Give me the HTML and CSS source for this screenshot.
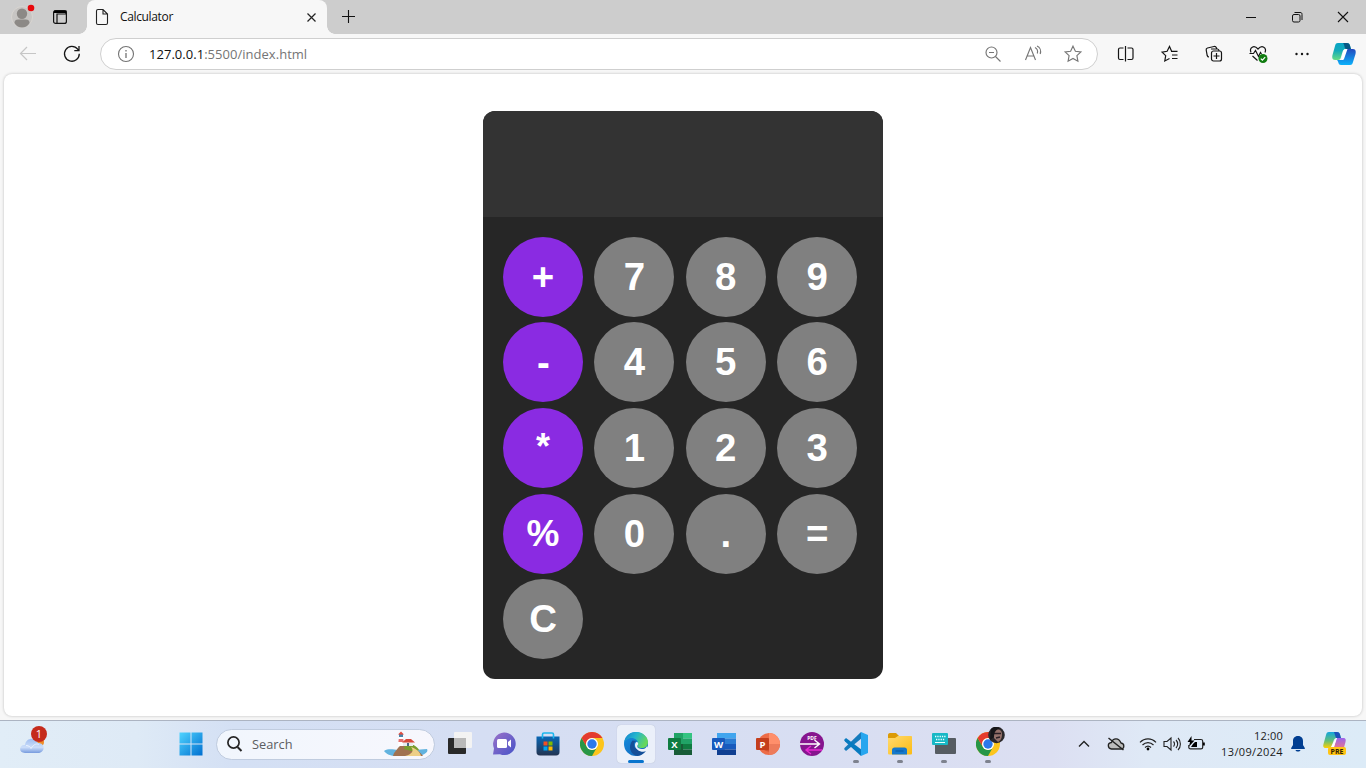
FILE: index.html
```html
<!DOCTYPE html>
<html lang="en">
<head>
<meta charset="utf-8">
<title>Calculator</title>
<link rel="stylesheet" href="styles.css">
</head>
<body>
<header class="tabstrip">
  <svg class="avatar" width="28" height="28" viewBox="0 0 28 28"><circle cx="14" cy="14" r="10.5" fill="#c7c5c3" stroke="#d8d5d1"/><circle cx="14" cy="10.700" r="5.200" fill="#8c8986"/><path d="M6.500 20c0-3 2-3.500 4-3.500h7c2 0 4 .5 4 3.500-3 6-12 6-15 0z" fill="#8c8986"/><circle cx="23" cy="5" r="3.300" fill="#e8080c"/></svg>
  <svg class="workspaces" width="16" height="16" viewBox="0 0 16 16"><rect x="1.600" y="1.600" width="12.800" height="12.800" rx="2" fill="none" stroke="#111" stroke-width="1.200"/><path d="M2 2h12v3H5v9" fill="none" stroke="#111" stroke-width="1.200"/><path d="M2 2h12v2H2z"/></svg>
  <div class="tab">
    <svg class="file" width="16" height="18" viewBox="0 0 16 18"><path d="M4 1.500h5l4.500 4.500v9c0 1-.5 1.500-1.500 1.500H4c-1 0-1.500-.5-1.500-1.500V3c0-1 .5-1.500 1.500-1.500zM9 1.500V6h4.500" fill="none" stroke="#222" stroke-width="1.100"/></svg>
    <span class="tab-title">Calculator</span>
    <svg width="12" height="12" viewBox="0 0 12 12"><path d="M2.500 2.500l8 8M10.500 2.500l-8 8" stroke="#222" stroke-width="1.200"/></svg>
  </div>
  <svg class="plus" width="16" height="16" viewBox="0 0 16 16"><path d="M8.500 1v13M2 7.500h13" stroke="#111" stroke-width="1.100"/></svg>
  <div class="window-buttons">
    <svg viewBox="0 0 46 34"><path d="M18 17.500h10" stroke="#111"/></svg>
    <svg viewBox="0 0 46 34"><rect x="18.500" y="14.500" width="7.500" height="7.500" rx="1.500" fill="none" stroke="#111"/><path d="M20.500 12.500H26c1.500 0 2 .5 2 2V20" fill="none" stroke="#111"/></svg>
    <svg viewBox="0 0 46 34"><path d="M18 12l10 10M28 12L18 22" stroke="#111" stroke-width="1.100"/></svg>
  </div>
</header>
<nav class="toolbar">
  <svg class="back" width="20" height="20" viewBox="0 0 20 20"><path d="M18 9.500H2.500M9 3L2.500 9.500 9 16" fill="none" stroke="#c6c6c6" stroke-width="1.200"/></svg>
  <svg class="reload" width="20" height="20" viewBox="0 0 20 20"><path d="M17.300 9.800a7.400 7.400 0 1 1-1.600-4.600L17 6.500M17 2v4.700h-4.700" fill="none" stroke="#151515" stroke-width="1.300"/></svg>
  <div class="address">
    <svg class="info" width="18" height="18" viewBox="0 0 18 18"><circle cx="9" cy="9" r="7.500" fill="none" stroke="#737373" stroke-width="1.100"/><path d="M9 8v5M9 5v1.400" stroke="#737373" stroke-width="1.300"/></svg>
    <span class="url"><b>127.0.0.1</b>:5500/index.html</span>
    <div class="address-icons">
      <svg viewBox="0 0 20 20"><circle cx="8.500" cy="8.500" r="5.500"/><path d="M12.500 12.500l5 5M6 8.500h5"/></svg>
      <svg viewBox="0 0 20 20"><path d="M2.500 16L7.500 3.500 12.500 16M4.200 12h6.600M12 3.500c2 1 3 3.500 2.300 6M14 2c3 1.200 4.300 4.500 3.200 8"/></svg>
      <svg viewBox="0 0 20 20"><path d="M10 2.200l2.400 5 5.500.7-4 3.800 1 5.500-4.900-2.700-4.900 2.700 1-5.500-4-3.800 5.500-.7z"/></svg>
    </div>
  </div>
  <div class="actions">
    <svg viewBox="0 0 20 20"><path d="M7.500 4H4C3 4 2.500 4.500 2.500 5.500v8.500c0 1 .5 1.500 1.500 1.500h3.500M11.500 4h4c1 0 1.500.5 1.500 1.500v8.500c0 1-.5 1.500-1.500 1.500h-4M9.500 2v15.500"/></svg>
    <svg viewBox="0 0 20 20"><path d="M11.500 7L9.500 2.500 7.100 7.300l-5 .8 3.600 3.600-.9 5.300 4.700-2.500M11 7.300h6.500M12 11h5.500M12 14.500h5.500"/></svg>
    <svg viewBox="0 0 20 20"><rect x="7.500" y="7" width="10" height="10" rx="2"/><path d="M12.500 9v6M9.500 12h6M5 13c-1 0-1.500-.5-1.800-1.500L2.200 6c-.2-1 .3-1.700 1.300-2l6.500-1.500c1.300-.2 2 .3 2.500 1.500l.3.900M7 5h6.500c1 0 1.500.5 1.500 2"/></svg>
    <svg viewBox="0 0 20 20"><path d="M3 8.500C1 3.500 6 .5 10 5c4-4.500 9-1.500 7 3.500M1.500 9.500h4l2-3 3 6 2-4 1 1.500M4.500 12l5 4.500"/><circle class="ok" cx="15" cy="14.500" r="4.500"/><path class="tick" d="M12.800 14.600l1.600 1.600 2.800-3"/></svg>
    <svg viewBox="0 0 20 20"><g class="dots"><circle cx="4.500" cy="10" r="1.200"/><circle cx="10" cy="10" r="1.200"/><circle cx="15.500" cy="10" r="1.200"/></g></svg>
  </div>
  <svg class="copilot" width="26" height="26" viewBox="0 0 26 26">
    <defs><linearGradient id="teal" x1="0" y1="0" x2="0" y2="1"><stop stop-color="#08a4c5"/><stop offset=".45" stop-color="#14aaba"/><stop offset="1" stop-color="#67dc83"/></linearGradient><linearGradient id="blue" x1="0" y1="0" x2="0" y2="1"><stop stop-color="#2349be"/><stop offset="1" stop-color="#0bb2fb"/></linearGradient></defs>
    <path d="M7 2h9c3 0 3 3 4 6h-5c-2 0-3 1-3.500 3L10 16c-.5 2-1 3-3 3H4c-3 0-3-3-2.500-5L4 5c.5-2 1-3 3-3z" fill="url(#teal)"/><path d="M12 2h4c3 0 3 3 4 6h-5c-2-1-1-4-3-6z" fill="#075884"/><path d="M16 8h6c3 0 3 3 2.500 5L22 21c-.5 2-1 3-3 3h-9c-3 0-2-3-4-5h3c3 0 3-1 3.600-3L15 10c.2-1 .5-1.600 1-2z" fill="url(#blue)"/><path d="M14.500 8h2L13 18c-.4 1-1 1-3 1 2-3 1.500-11 4.500-11z" fill="#fff"/>
  </svg>
</nav>
<main class="viewport">
  <section class="calculator">
    <div class="display"></div>
    <div class="keys">
      <button class="key op">+</button><button class="key">7</button><button class="key">8</button><button class="key">9</button>
      <button class="key op minus">-</button><button class="key">4</button><button class="key">5</button><button class="key">6</button>
      <button class="key op times">*</button><button class="key">1</button><button class="key">2</button><button class="key">3</button>
      <button class="key op percent">%</button><button class="key">0</button><button class="key">.</button><button class="key">=</button>
      <button class="key">C</button>
    </div>
  </section>
</main>
<footer class="taskbar">
  <svg class="weather" width="30" height="32" viewBox="0 0 30 32"><defs><linearGradient id="cloud" x1="0" y1="0" x2="0" y2="1"><stop stop-color="#9fbdf0"/><stop offset=".6" stop-color="#ccdefa"/><stop offset="1" stop-color="#779bde"/></linearGradient></defs><circle cx="20" cy="17" r="4" fill="#ef8d27"/><path d="M5 28c-7 0-6-8.500 0-8 1-8 11-8 13-2 8 0 7 10 0 10z" fill="url(#cloud)"/><path d="M6 20.500c3 0 5 2 5 3 3-5 6-5 8-4" fill="none" stroke="#eaf3ff"/><circle cx="19" cy="9" r="8" fill="#c52b1c"/><text class="badge" x="19" y="13" text-anchor="middle">1</text></svg>
  <svg class="start" width="24" height="24" viewBox="0 0 24 24"><defs><linearGradient id="win" x1="0" y1="0" x2="1" y2="1"><stop stop-color="#4fd4ff"/><stop offset="1" stop-color="#006fd0"/></linearGradient></defs><path d="M.5.5h11v11H.5zM12.500.5h11v11h-11zM.5 12.500h11v11H.5zM12.500 12.500h11v11h-11z" fill="url(#win)"/></svg>
  <div class="search">
    <svg width="18" height="18" viewBox="0 0 18 18"><circle cx="7.500" cy="7.500" r="5.600" fill="none" stroke="#262626" stroke-width="1.700"/><path d="M11.500 12l4 4" stroke="#262626" stroke-width="2"/></svg>
    <span class="search-text">Search</span>
    <svg class="island" width="46" height="26" viewBox="0 0 46 26"><path d="M1 20c5-3 10-1 14-1s10 1 29-1c2 3-3 6-9 7H13C8 25 3 23 1 20z" fill="#62b3df"/><path d="M10 25c1-4 3-5 5-8 3-4 7-4 11-2 7 2 12 7 14 10z" fill="#a07251"/><path d="M22 13c9-1 13 4 14 6-5 3-10 0-15-1z" fill="#789d2e"/><path d="M22 25c8-2 9-6 6-9 6 2 9 5 10 9z" fill="#edcf87"/><path d="M16 5h4l1 10h-6z" fill="#fff"/><path d="M15.700 8h4.600l.3 3h-5.200z" fill="#e67070"/><path d="M16 3h4v3h-4z" fill="#4a83aa"/><path d="M15 3.500L18 .5 21 3.500z" fill="#e34b3d"/><path d="M20 11h10v4H20z" fill="#e9edef"/><path d="M19 11.500l4-3.500h5l4 3.500z" fill="#d94a3b"/><path d="M24 12h2v3h-2z" fill="#496985"/></svg>
  </div>
  <div class="apps">
    <div class="app"><svg viewBox="0 0 24 24"><rect y="6" width="18" height="16" rx="1" fill="#292929"/><rect x="6" width="18" height="16" rx="1" fill="#f3f3f3"/><path d="M6 6h12v10H6z" fill="#b9b9b9"/></svg></div>
    <div class="app"><svg viewBox="0 0 24 24"><defs><linearGradient id="chat" x1="0" y1="0" x2="1" y2="1"><stop stop-color="#9b72c9"/><stop offset="1" stop-color="#4653c8"/></linearGradient></defs><path d="M12 0.500a11.300 11.300 0 1 1-4 21.700L1 22.500l1-6A11.500 11.500 0 0 1 12 .5z" fill="url(#chat)"/><rect x="5" y="7" width="10" height="9" rx="1.500" fill="#fff"/><path d="M16 10l3-2.500v8L16 13z" fill="#fff"/></svg></div>
    <div class="app"><svg viewBox="0 0 24 24"><defs><linearGradient id="store" x1="0" y1="0" x2="0" y2="1"><stop stop-color="#0967b5"/><stop offset="1" stop-color="#233350"/></linearGradient></defs><path d="M.5 4.500h23V20c0 2-1 3.500-3.500 3.500H4C1.500 23.500.5 22 .5 20z" fill="url(#store)"/><path d="M6.500 6.500V2.500c0-1 .5-1.500 1.500-1.500h8c1 0 1.500.5 1.500 1.500v4" fill="none" stroke="#1bb6ed" stroke-width="1.600"/><path d="M7.500 9.500h4v4h-4z" fill="#f25022"/><path d="M12.500 9.500h4v4h-4z" fill="#7fba00"/><path d="M7.500 14.500h4v4h-4z" fill="#00a4ef"/><path d="M12.500 14.500h4v4h-4z" fill="#ffb900"/></svg></div>
    <div class="app"><svg viewBox="0 0 24 24"><g id="chrome"><circle cx="12" cy="12" r="12" fill="#fcc51c"/><path d="M12 24A12 12 0 0 1 1.600 6L7 15a6 6 0 0 0 9.500 1z" fill="#279647"/><path d="M1.600 6A12 12 0 0 1 22.400 6H12a6 6 0 0 0-5.500 8.200z" fill="#e43b2f"/><circle cx="12" cy="12" r="6" fill="#fff"/><circle cx="12" cy="12" r="4.700" fill="#2b78e9"/></g></svg></div>
    <div class="app active"><svg viewBox="0 0 24 24"><defs><linearGradient id="edgeTop" x1="0" y1="0" x2="1" y2=".4"><stop stop-color="#147fce"/><stop offset=".5" stop-color="#23b5ce"/><stop offset="1" stop-color="#66d75c"/></linearGradient><linearGradient id="edgeLow" x1="0" y1="0" x2="1" y2="1"><stop stop-color="#138ee1"/><stop offset="1" stop-color="#1562b4"/></linearGradient></defs><circle cx="12" cy="12" r="12" fill="url(#edgeLow)"/><path d="M0 11C1 3 7 0 12 0c7 0 12 5 12 10 0 4-3 6-6 6-4 0-5.500-1.500-4-3.500C15 8 9 5 5 6.500 2 7.500.5 9.500 0 11z" fill="url(#edgeTop)"/><path d="M8.500 8.500c-5 6-2 14.500 5 15.400 4-.3 7-2.900 8.500-5.400-5 2-12-1-12-6 0-2 1-3 2.500-3.500z" fill="#164f98"/><path d="M14 12.500c-2.500 3 1.500 5 5 4.500 2-.2 3.500-1.500 4-3l2 4-2.500 1C18 21.500 11 18 11 13c0-1.500.7-2.700 2-3.200 1 .8 1.500 1.700 1 2.700z" fill="#edf2fa"/></svg></div>
    <div class="app"><svg viewBox="0 0 24 24"><path d="M6 1h9v11H6z" fill="#21a366"/><path d="M15 1h9v5.500h-9z" fill="#33c481"/><path d="M15 6.500h9V12h-9z" fill="#21a366"/><path d="M6 12h9v11H6z" fill="#185c37"/><path d="M15 12h9v5.500h-9z" fill="#107c41"/><path d="M15 17.500h9V23h-9z" fill="#185c37"/><rect y="6" width="13" height="12" rx="1" fill="#107c41"/><text class="office" x="6.500" y="15.500" text-anchor="middle">X</text></svg></div>
    <div class="app"><svg viewBox="0 0 24 24"><path d="M5 1h19v5.500H5z" fill="#41a5ee"/><path d="M5 6.500h19V12H5z" fill="#2b7cd3"/><path d="M5 12h19v5.500H5z" fill="#185abd"/><path d="M5 17.500h19V23H5z" fill="#103f91"/><rect y="6" width="13" height="12" rx="1" fill="#185abd"/><text class="office" x="6.500" y="15.500" text-anchor="middle">W</text></svg></div>
    <div class="app"><svg viewBox="0 0 24 24"><circle cx="13" cy="12" r="11" fill="#ed6c47"/><path d="M13 1v11h11A11 11 0 0 0 13 1z" fill="#ff8f6b"/><path d="M3 12h21a11 11 0 0 1-21 0z" fill="#d35230"/><path d="M13 12h11a11 11 0 0 1-11 11z" fill="#ed7b5b"/><rect y="6" width="13" height="12" rx="1" fill="#c43e1c"/><text class="office" x="6.500" y="15.500" text-anchor="middle">P</text></svg></div>
    <div class="app"><svg viewBox="0 0 24 24"><circle cx="12" cy="12" r="12" fill="#86158e"/><text class="pdf" x="12" y="7.500" text-anchor="middle">PDF</text><path d="M0 12h19M14.500 8l5 4-5 4" fill="none" stroke="#fff" stroke-width="1.400"/><path d="M22 18H7M11 14l-5 4 5 4" fill="none" stroke="#e928d3" stroke-width="1.400"/></svg></div>
    <div class="app open"><svg viewBox="0 0 24 24"><path d="M17 0L1 15.500 0 17l2 2L18 6z" fill="#167bbd"/><path d="M17 24L1 9.500 0 8l2-2 16 12z" fill="#087abf"/><path d="M17 0l7 3v18l-7 3z" fill="#27a6ef"/></svg></div>
    <div class="app open"><svg viewBox="0 0 24 24"><defs><linearGradient id="folder" x1="0" y1="0" x2="1" y2="1"><stop stop-color="#ffda70"/><stop offset="1" stop-color="#fcbb12"/></linearGradient></defs><path d="M0 3c0-1 .5-2 2-2h6l3 3v3H0z" fill="#dc9b07"/><path d="M0 6h7l3-2h13c.7 0 1 .5 1 1v16c0 1-.5 1.500-1.500 1.500h-21C.5 22.500 0 22 0 21z" fill="url(#folder)"/><path d="M4 22.500V18c0-1.500 1-2.500 2.500-2.500h10c1.500 0 2.500 1 2.500 2.500v4.500z" fill="#1578cc"/><path d="M7.500 19h8" stroke="#0a56a0"/></svg></div>
    <div class="app open"><svg viewBox="0 0 24 24"><rect x="3" y="6" width="21" height="16" rx="1" fill="#565c62"/><rect y="1" width="16" height="12" rx="1" fill="#18b8c6"/><path d="M3 4.500h11M4 7.500h9" stroke="#eaffff" stroke-width="1.300" stroke-dasharray="1.300 1"/><path d="M3 10.500h10" stroke="#eaffff"/></svg></div>
    <div class="app open"><svg class="profile" viewBox="0 0 30 30"><g transform="translate(0 5)"><use href="#chrome"/></g><circle cx="20.500" cy="8" r="8.300" fill="#2b282b"/><path d="M18 3c4-2 8 0 8 4 0 5-2 7-4 8l-4-4z" fill="#94716a"/><path d="M18 6.500h7M20 11l4-1" stroke="#2c2026" stroke-width="1.300"/><path d="M15 2c3-3 8-2 9 0-4 0-6 3-6 8l-4 3z" fill="#161619"/></svg></div>
  </div>
  <div class="tray">
    <svg viewBox="0 0 20 20"><path d="M5 12.500l5-5 5 5" fill="none" stroke="#222" stroke-width="1.400"/></svg>
    <svg class="cloud-off" viewBox="0 0 20 20"><path d="M5.500 15c-4-.5-4.500-6 0-6.500C7 3.500 13 3.500 15 9c4 .5 3.500 6 0 6z" fill="#bcbcbc" stroke="#222" stroke-width="1.300"/><path d="M2.500 4l15 12" stroke="#222" stroke-width="1.500"/></svg>
    <svg class="wifi" viewBox="0 0 20 20"><path d="M2 8.300c4.500-4.700 11.500-4.700 16 0M4.500 11c3.200-3.200 7.800-3.200 11 0M7 13.500c2-1.800 4-1.800 6 0" fill="none" stroke="#222" stroke-width="1.200"/><circle cx="10" cy="15" r="1.400"/></svg>
    <svg class="sound" viewBox="0 0 20 20"><path d="M2 7.500h3l4-3.500v12l-4-3.500H2zM11.500 7.500c1.300 1.300 1.300 3.700 0 5M14 6c2.200 2.200 2.200 5.800 0 8M16 4c3.200 3.200 3.200 8.800 0 12" fill="none" stroke="#222" stroke-width="1.100"/></svg>
    <svg class="battery" viewBox="0 0 20 20"><path d="M8 5.500h7c1 0 1.700.7 1.700 1.700v6c0 1-.7 1.700-1.700 1.700H4.500c-1 0-1.700-.7-1.700-1.700V11" fill="none" stroke="#222" stroke-width="1.200"/><path d="M5.500 2L1.500 8h2.500l-1 4.500L8.500 6.500H5.500z"/><path d="M7 10l2-2h2v5H5zM17 8.500h1.800v3H17z"/></svg>
  </div>
  <div class="clock"><span>12:00</span><span class="date">13/09/2024</span></div>
  <svg class="bell" width="16" height="18" viewBox="0 0 16 18"><path d="M8 1c3.500 0 5 2.400 5 5v4l1.800 3v1H1.200v-1L3 10V6c0-2.600 1.500-5 5-5zM5.500 15h5c-.5 2-4.500 2-5 0z" fill="#003e91"/></svg>
  <svg class="pre" width="26" height="26" viewBox="0 0 26 26"><defs><linearGradient id="preA" x1="0" y1="0" x2="0" y2="1"><stop stop-color="#12a5dd"/><stop offset=".55" stop-color="#63bf78"/><stop offset="1" stop-color="#ffd000"/></linearGradient><linearGradient id="preB" x1="0" y1="0" x2="0" y2="1"><stop stop-color="#9a64ee"/><stop offset="1" stop-color="#fb7a76"/></linearGradient></defs><path d="M7 1h8c3 0 3 3 4 6h-4c-2 0-3 1-3.500 3L10 14c-.5 2-1 3-3 3H4c-3 0-3-2-2.500-4L4 4c.5-2 1-3 3-3z" fill="url(#preA)"/><path d="M12 1h3c3 0 3 3 4 6h-5z" fill="#1c50ba"/><path d="M15 7h6c3 0 3 2 2.500 4L21 20H9c3 0 3-4 3.500-6L14 9c.2-1 .5-1.600 1-2z" fill="url(#preB)"/><path d="M14 7h1l-3 9H9z" fill="#fff"/><rect x="6" y="16" width="18" height="8" rx="2" fill="#ffc414"/><text class="pre-label" x="15" y="22.500" text-anchor="middle">PRE</text></svg>
</footer>
</body>
</html>
```
FILE: styles.css
```css
* { box-sizing: border-box; }
body {
  margin: 0;
  width: 1366px;
  height: 768px;
  overflow: hidden;
  display: flex;
  flex-direction: column;
  background: #f7f7f7;
  font-family: "Open Sans", "Noto Sans", sans-serif;
}
svg { display: block; flex: none; }
.tabstrip {
  height: 34px;
  flex: none;
  display: flex;
  align-items: center;
  background: #cdcdcd;
}
.avatar { margin-left: 8px; }
.workspaces { margin-left: 16px; }
.tab {
  position: relative;
  width: 240px;
  height: 34px;
  margin-left: 19px;
  padding: 0 10px 0 7px;
  display: flex;
  align-items: center;
  background: #f7f7f7;
  border-radius: 8px 8px 0 0;
}
.tab::before, .tab::after {
  content: "";
  position: absolute;
  bottom: 0;
  width: 8px;
  height: 8px;
}
.tab::before { left: -8px; background: radial-gradient(circle at 0 0, #cdcdcd 7.5px, #f7f7f7 8px); }
.tab::after { right: -8px; background: radial-gradient(circle at 100% 0, #cdcdcd 7.5px, #f7f7f7 8px); }
.tab-title { margin: -1px 0 0 10px; flex: 1; font-size: 12px; letter-spacing: -.35px; color: #111; }
.plus { margin-left: 13px; }
.window-buttons { display: flex; margin-left: auto; }
.window-buttons svg { width: 46px; height: 34px; }
.toolbar {
  height: 39px;
  flex: none;
  display: flex;
  align-items: center;
}
.back { margin-left: 18px; }
.reload { margin-left: 24px; }
.address {
  width: 998px;
  height: 32px;
  margin: 1px 0 0 18px;
  padding: 0 14px 0 16px;
  display: flex;
  align-items: center;
  border: 1px solid #cfcfcf;
  border-radius: 16px;
  background: #fff;
}
.url { margin-left: 14px; flex: 1; font-size: 13px; letter-spacing: .03px; color: #757575; }
.url b { font-weight: 400; color: #111; }
.address-icons { display: flex; gap: 20px; }
.address-icons svg { width: 20px; height: 20px; fill: none; stroke: #767676; stroke-width: 1.15; }
.actions { display: flex; gap: 24px; margin-left: 18px; }
.actions svg { width: 20px; height: 20px; fill: none; stroke: #151515; stroke-width: 1.2; }
.actions .ok { fill: #107c10; stroke: none; }
.actions .tick { stroke: #fff; }
.actions .dots { fill: #151515; stroke: none; }
.copilot { margin-left: 19px; }
.viewport {
  height: 642px;
  flex: none;
  margin: 1px 4px 4px;
  display: flex;
  justify-content: center;
  align-items: center;
  background: #fff;
  border-radius: 8px;
  box-shadow: 0 0 3px rgba(0, 0, 0, .24);
}
.calculator {
  width: 400px;
  height: 568px;
  overflow: hidden;
  background: #262626;
  border-radius: 12px;
}
.display { height: 106px; background: #333; }
.keys {
  padding: 19.8px 20px 20px;
  display: grid;
  grid-template-columns: repeat(4, 80px);
  grid-auto-rows: 80px;
  column-gap: 11.4px;
  row-gap: 5.6px;
}
.key {
  padding: 0;
  border: 0;
  border-radius: 50%;
  background: #808080;
  color: #fff;
  font: bold 38.4px "Liberation Sans", Arial, sans-serif;
}
.key.op { background: #8a2be2; }
.key.minus { padding: 2px 0 0 1px; }
.key.times { padding-bottom: 2px; font-size: 36px; }
.key.percent { font-size: 37px; padding-top: 1px; }
.taskbar {
  height: 48px;
  flex: none;
  display: flex;
  align-items: center;
  padding-bottom: 1px;
  border-top: 1px solid #acb4c2;
  background: linear-gradient(90deg, #e1edf7 0, #deeaf6 10%, #d4e0f4 17%, #d5def3 35%, #d8def2 60%, #dcdff2 77%, #dfe9f6 84%, #dcebf7 100%);
}
.weather { margin: -7px 0 0 20px; }
.badge { font-size: 11px; fill: #fff; }
.start { margin-left: 129px; }
.search {
  width: 219px;
  height: 31px;
  margin-left: 13px;
  padding: 0 5px 0 9px;
  display: flex;
  align-items: center;
  border: 1px solid #c0ccdf;
  border-radius: 16px;
  background: linear-gradient(90deg, #f1f6fd, #f7f7fd);
}
.search-text { flex: 1; margin-left: 8px; font-size: 12.8px; color: #5b5d61; }
.apps { display: flex; margin-left: 3px; }
.app {
  position: relative;
  width: 38px;
  height: 38px;
  margin: 0 3px;
  display: flex;
  align-items: center;
  justify-content: center;
  border-radius: 4px;
}
.app svg { width: 24px; height: 24px; }
.app .profile { width: 30px; height: 30px; margin: -5px 0 0 6px; }
.app.active { background: #ebf0fa; box-shadow: 0 0 1px #a8b0c2; }
.app.active::after, .app.open::after {
  content: "";
  position: absolute;
  left: 16px;
  bottom: 0;
  width: 6px;
  height: 3px;
  border-radius: 2px;
  background: #7e828e;
}
.app.active::after { left: 11px; width: 16px; background: #0874ce; }
.office { font: bold 9.5px "Open Sans", sans-serif; fill: #fff; }
.pdf { font: bold 5px "Open Sans", sans-serif; fill: #fff; }
.tray { display: flex; align-items: center; margin-left: 64px; }
.tray svg { width: 20px; height: 20px; }
.tray .cloud-off { margin-left: 12px; }
.tray .wifi { margin-left: 12px; }
.tray .sound { margin-left: 4px; }
.tray .battery { margin-left: 4px; }
.clock {
  width: 77px;
  display: flex;
  flex-direction: column;
  align-items: flex-end;
  font-size: 11px;
  letter-spacing: .2px;
  line-height: 16px;
  color: #1b1b1b;
}
.date { letter-spacing: .35px; }
.bell { margin-left: 7px; }
.pre { margin-left: 16px; }
.pre-label { font: bold 7px "Open Sans", sans-serif; fill: #342400; }
```
